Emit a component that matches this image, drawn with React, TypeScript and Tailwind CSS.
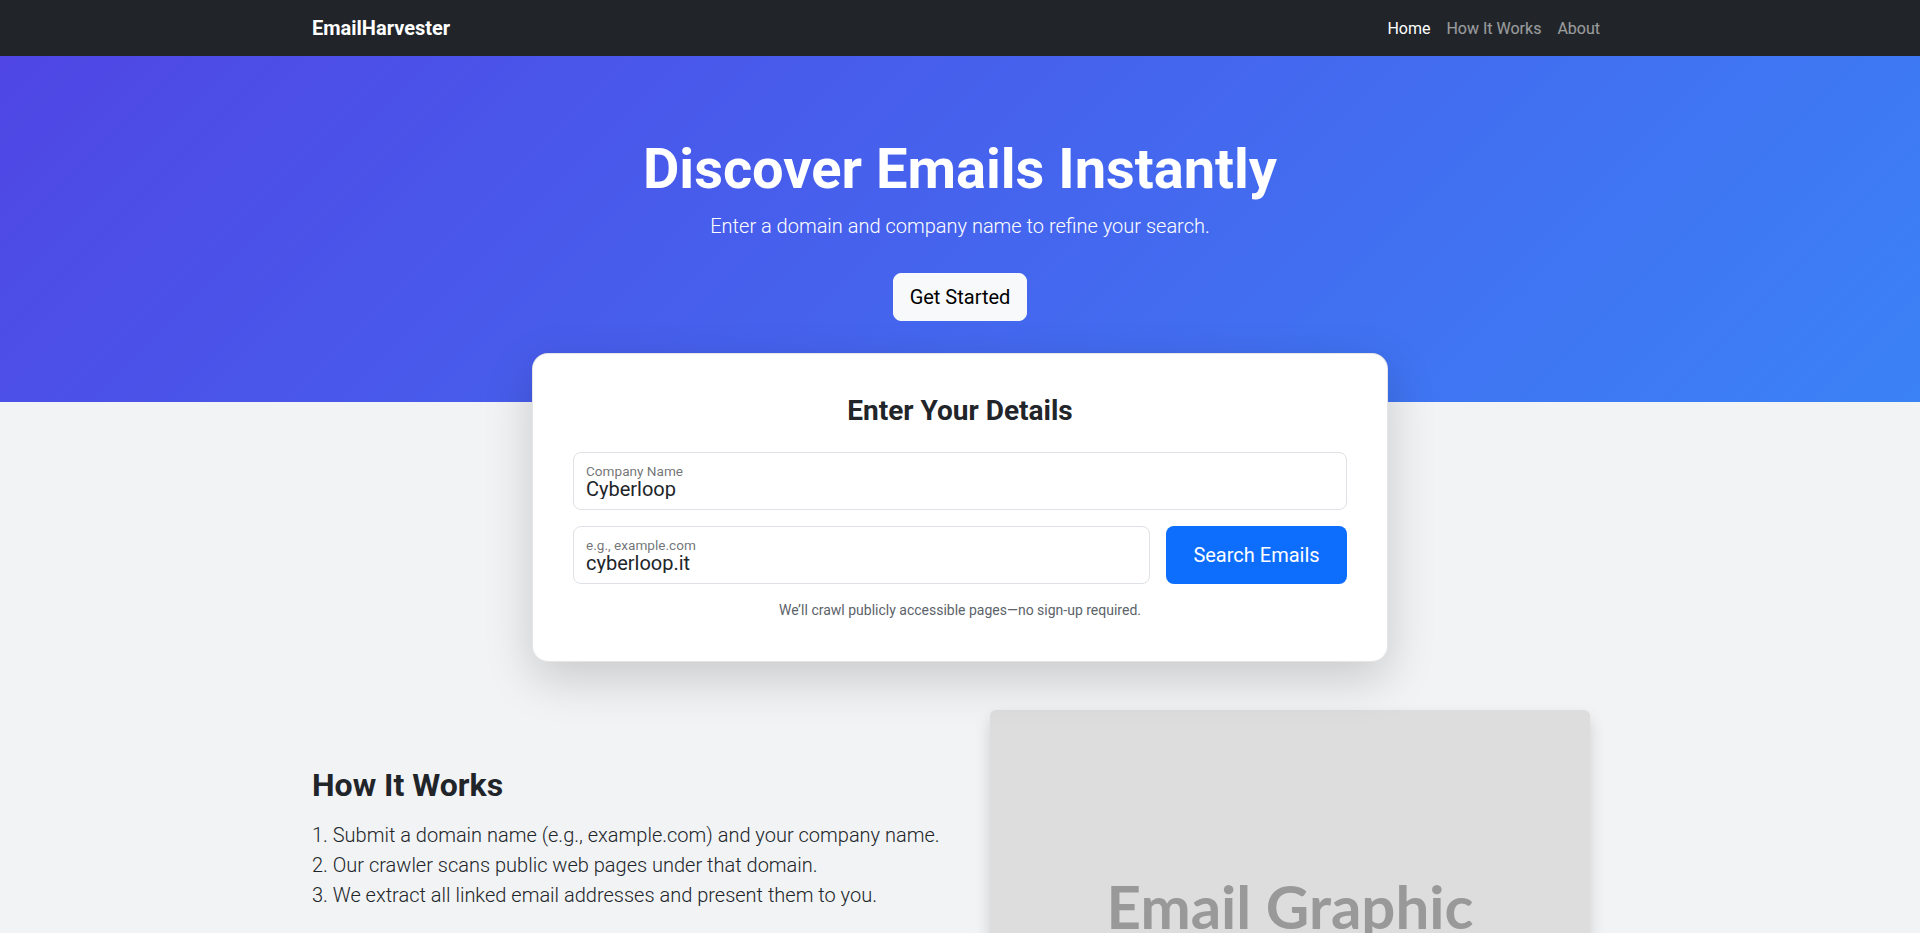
const STEPS = [
  'Submit a domain name (e.g., example.com) and your company name.',
  'Our crawler scans public web pages under that domain.',
  'We extract all linked email addresses and present them to you.',
];

interface FieldProps {
  label: string;
  value: string;
  className?: string;
}

function FloatingField({ label, value, className = '' }: FieldProps) {
  return (
    <div
      className={`flex h-[58px] flex-col rounded-lg border border-[#dee2e6] bg-white px-3 pt-[10px] ${className}`}
    >
      <span className="text-[13.6px] leading-4 text-[#212529]/65">{label}</span>
      <input
        readOnly
        value={value}
        className="h-5 w-full bg-transparent p-0 text-[20px] leading-5 text-[#212529] outline-none"
      />
    </div>
  );
}

export default function App() {
  return (
    <div className="min-h-screen bg-[#f1f3f5] font-['Roboto',sans-serif] text-[#212529]">
      {/* Navbar */}
      <nav className="bg-[#212529]">
        <div className="mx-auto flex h-14 max-w-[1320px] items-center justify-between px-3">
          <a href="#" className="text-[20px] font-bold leading-[30px] text-white">
            EmailHarvester
          </a>
          <ul className="flex pt-[2px] text-[16px] leading-6">
            <li>
              <a href="#" className="px-2 text-white">Home</a>
            </li>
            <li>
              <a href="#" className="px-2 text-white/55">How It Works</a>
            </li>
            <li>
              <a href="#" className="px-2 text-white/55">About</a>
            </li>
          </ul>
        </div>
      </nav>

      {/* Hero */}
      <header className="bg-[linear-gradient(135deg,#4f46e5,#3b82f6)] pt-20 pb-[81px] text-center text-white">
        <h1 className="mb-2 text-[56px] font-bold leading-[1.2]">Discover Emails Instantly</h1>
        <p className="mb-[32px] text-[20px] font-light leading-[30px]">
          Enter a domain and company name to refine your search.
        </p>
        <button className="rounded-lg border border-[#f8f9fa] bg-[#f8f9fa] px-4 py-2 text-[20px] leading-[30px] text-black">
          Get Started
        </button>
      </header>

      {/* Search card */}
      <div className="mx-auto max-w-[1320px] px-3">
        <div className="relative z-10 mx-auto -mt-[49px] w-[856px] rounded-2xl border border-black/10 bg-white p-10 shadow-[0_1rem_3rem_rgba(0,0,0,0.175)]">
          <h3 className="mb-6 text-center text-[28px] font-bold leading-[1.2]">Enter Your Details</h3>
          <FloatingField label="Company Name" value="Cyberloop" className="mb-4" />
          <div className="flex gap-4">
            <FloatingField label="e.g., example.com" value="cyberloop.it" className="flex-1" />
            <button className="h-[58px] w-[181px] rounded-lg bg-[#0d6efd] text-[20px] text-white">
              Search Emails
            </button>
          </div>
          <p className="mt-4 text-center text-[14px] leading-[21px] text-[#5c636a]">
            We’ll crawl publicly accessible pages—no sign-up required.
          </p>
        </div>
      </div>

      {/* How it works */}
      <section className="mx-auto mt-12 grid max-w-[1320px] grid-cols-2 gap-x-6 px-3 pb-12">
        <div className="pt-[56px]">
          <h2 className="mb-4 text-[32px] font-bold leading-[1.2]">How It Works</h2>
          <div className="text-[20px] font-light leading-[30px]">
            {STEPS.map((step, i) => (
              <p key={step}>
                {i + 1}. {step}
              </p>
            ))}
          </div>
        </div>
        <div className="flex justify-center">
          <div className="flex h-[400px] w-[600px] items-center justify-center rounded-md bg-[#dddddd] pb-2 shadow-[0_0.5rem_1rem_rgba(0,0,0,0.15)]">
            <span className="font-['Lato',sans-serif] text-[60px] font-bold text-[#999999]">
              Email Graphic
            </span>
          </div>
        </div>
      </section>
    </div>
  );
}
